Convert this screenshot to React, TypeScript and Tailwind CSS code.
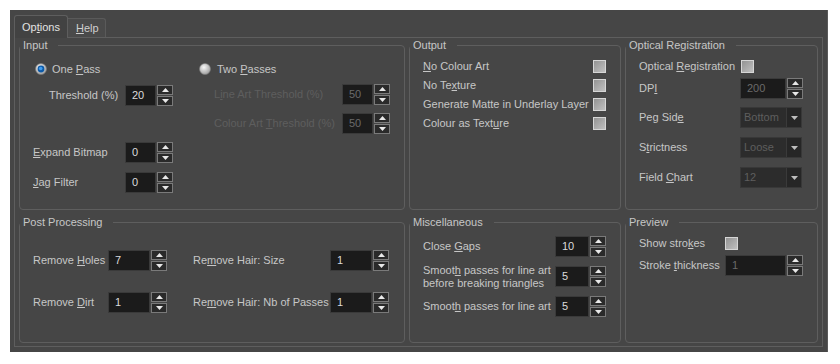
import type { ReactNode } from "react";
import clsx from "clsx";

function Arrows() {
  return (
    <div className="ml-px flex h-full w-[16px] shrink-0 flex-col gap-px">
      <div className="flex flex-1 items-center justify-center border border-[#7a7a7a] bg-[#2a2a2a]">
        <svg width="7" height="4" viewBox="0 0 7 4">
          <path d="M0 4 3.5 0 7 4Z" fill="#e8e8e8" />
        </svg>
      </div>
      <div className="flex flex-1 items-center justify-center border border-[#7a7a7a] bg-[#2a2a2a]">
        <svg width="7" height="4" viewBox="0 0 7 4">
          <path d="M0 0 3.5 4 7 0Z" fill="#e8e8e8" />
        </svg>
      </div>
    </div>
  );
}

function Spin({ value, w, off }: { value: string; w: string; off?: boolean }) {
  return (
    <div className="flex h-[21px] shrink-0">
      <div
        className={clsx(
          "flex h-full items-center border border-[#3a3a3a] bg-[#1b1b1b] pl-[6px]",
          w,
          off ? "text-[#6a6a6a]" : "text-[#dcdcdc]"
        )}
      >
        {value}
      </div>
      <Arrows />
    </div>
  );
}

function Combo({ value }: { value: string }) {
  return (
    <div className="flex h-[21px] w-[62px] shrink-0 border border-[#383838] bg-[#2c2c2c]">
      <div className="flex flex-1 items-center pl-[3px] text-[#5e5e5e]">{value}</div>
      <div className="flex w-[15px] items-center justify-center border-l border-[#3a3a3a] bg-[#262626]">
        <svg width="7" height="4" viewBox="0 0 7 4">
          <path d="M0 0 3.5 4 7 0Z" fill="#bdbdbd" />
        </svg>
      </div>
    </div>
  );
}

function Check() {
  return (
    <div className="h-[13px] w-[13px] shrink-0 border border-[#d6d6d6] bg-linear-to-br from-[#939393] to-[#c0c0c0]" />
  );
}

function Radio({ on }: { on?: boolean }) {
  const id = on ? "radio-on" : "radio-off";
  return (
    <svg width="12" height="12" viewBox="0 0 12 12" className="shrink-0">
      <defs>
        <radialGradient id={id} cx="40%" cy="35%" r="70%">
          <stop offset="0" stopColor="#f6f6f6" />
          <stop offset="1" stopColor="#9a9a9a" />
        </radialGradient>
      </defs>
      <circle cx="6" cy="6" r="5.5" fill={`url(#${id})`} stroke="#7c7c7c" strokeWidth="0.6" />
      {on && (
        <>
          <circle cx="6" cy="6" r="3.4" fill="#0d5aa8" />
          <circle cx="5.7" cy="5.5" r="1.8" fill="#3f9df0" />
        </>
      )}
    </svg>
  );
}

function Label({ w, off, children }: { w: string; off?: boolean; children: ReactNode }) {
  return (
    <span className={clsx("shrink-0 whitespace-nowrap", w, off ? "text-[#5e5e5e]" : "text-[#c6c6c6]")}>
      {children}
    </span>
  );
}

function Group({ title, className, children }: { title: string; className: string; children: ReactNode }) {
  return (
    <fieldset className={clsx("min-w-0 shrink-0 rounded-[4px] border border-[#5e5e5e] p-0", className)}>
      <legend className="pl-[3px] pr-[11px] leading-[13px] text-[#c6c6c6]">{title}</legend>
      {children}
    </fieldset>
  );
}

export default function App() {
  return (
    <div className="h-[364px] w-[840px] bg-white pl-[10px] pt-[10px] font-['Liberation_Sans',Arial,sans-serif] text-[11px] leading-[13px]">
      <div className="flex h-[342px] w-[818px] flex-col border-r border-[#5a5a5a] bg-[#464646] pl-[4px] pt-[5px]">
        {/* tabs */}
        <div className="flex h-[22px] items-end">
          <div className="relative z-10 -mb-px flex h-[23px] items-center rounded-t-[3px] border border-b-0 border-[#5e5e5e] bg-[#424242] px-[7px] text-[#e2e2e2]">
            Op<u>t</u>ions
          </div>
          <div className="flex h-[19px] items-center rounded-tr-[3px] border border-b-0 border-l-0 border-[#5a5a5a] bg-[#4a4a4a] pl-[8px] pr-[6px] text-[#cfcfcf]">
            <u>H</u>elp
          </div>
        </div>

        {/* pane */}
        <div className="h-[310px] w-[809px] border border-[#5e5e5e] pl-[4px] pt-px">
          <div className="flex gap-[4px]">
            <Group title="Input" className="h-[171px] w-[386px]">
              <div className="flex pl-[13px]">
                <div className="flex w-[166px] flex-col">
                  <div className="mt-[7px] flex h-[20px] items-center gap-[5px] pl-[2px]">
                    <Radio on />
                    <Label w="w-auto">
                      One <u>P</u>ass
                    </Label>
                  </div>
                  <div className="mt-[6px] flex h-[21px] items-center pl-[16px]">
                    <Label w="w-[76px]">Threshold (%)</Label>
                    <Spin value="20" w="w-[31px]" />
                  </div>
                  <div className="mt-[36px] flex h-[21px] items-center">
                    <Label w="w-[92px]">
                      <u>E</u>xpand Bitmap
                    </Label>
                    <Spin value="0" w="w-[31px]" />
                  </div>
                  <div className="mt-[9px] flex h-[21px] items-center">
                    <Label w="w-[92px]">
                      <u>J</u>ag Filter
                    </Label>
                    <Spin value="0" w="w-[31px]" />
                  </div>
                </div>
                <div className="flex flex-col">
                  <div className="mt-[7px] flex h-[20px] items-center gap-[6px]">
                    <Radio />
                    <Label w="w-auto">
                      Two <u>P</u>asses
                    </Label>
                  </div>
                  <div className="mt-[5px] flex h-[21px] items-center pl-[15px]">
                    <Label w="w-[128px]" off>
                      L<u>i</u>ne Art Threshold (%)
                    </Label>
                    <Spin value="50" w="w-[31px]" off />
                  </div>
                  <div className="mt-[8px] flex h-[21px] items-center pl-[15px]">
                    <Label w="w-[128px]" off>
                      Colour Art <u>T</u>hreshold (%)
                    </Label>
                    <Spin value="50" w="w-[31px]" off />
                  </div>
                </div>
              </div>
            </Group>

            <Group title="Output" className="h-[171px] w-[212px]">
              <div className="mt-[5px] flex flex-col pl-[13px] pr-[14px]">
                <div className="flex h-[19px] items-center justify-between">
                  <Label w="w-auto">
                    <u>N</u>o Colour Art
                  </Label>
                  <Check />
                </div>
                <div className="flex h-[19px] items-center justify-between">
                  <Label w="w-auto">
                    No Te<u>x</u>ture
                  </Label>
                  <Check />
                </div>
                <div className="flex h-[19px] items-center justify-between">
                  <Label w="w-auto">Generate Matte in Underlay Layer</Label>
                  <Check />
                </div>
                <div className="flex h-[19px] items-center justify-between">
                  <Label w="w-auto">
                    Colour as Text<u>u</u>re
                  </Label>
                  <Check />
                </div>
              </div>
            </Group>

            <Group title="Optical Registration" className="h-[171px] w-[193px]">
              <div className="flex flex-col pl-[13px]">
                <div className="mt-[4px] flex h-[20px] items-center">
                  <Label w="w-[102px]">
                    Optical <u>R</u>egistration
                  </Label>
                  <Check />
                </div>
                <div className="mt-[2px] flex h-[21px] items-center">
                  <Label w="w-[101px]">
                    DP<u>I</u>
                  </Label>
                  <Spin value="200" w="w-[46px]" off />
                </div>
                <div className="mt-[8px] flex h-[21px] items-center">
                  <Label w="w-[101px]">
                    Peg Sid<u>e</u>
                  </Label>
                  <Combo value="Bottom" />
                </div>
                <div className="mt-[9px] flex h-[21px] items-center">
                  <Label w="w-[101px]">
                    S<u>t</u>rictness
                  </Label>
                  <Combo value="Loose" />
                </div>
                <div className="mt-[9px] flex h-[21px] items-center">
                  <Label w="w-[101px]">
                    Field <u>C</u>hart
                  </Label>
                  <Combo value="12" />
                </div>
              </div>
            </Group>
          </div>

          <div className="mt-[6px] flex gap-[4px]">
            <Group title="Post Processing" className="h-[127px] w-[386px]">
              <div className="flex flex-col pl-[13px]">
                <div className="mt-[21px] flex h-[21px] items-center">
                  <Label w="w-[75px]">
                    Remove <u>H</u>oles
                  </Label>
                  <Spin value="7" w="w-[42px]" />
                  <div className="w-[26px] shrink-0" />
                  <Label w="w-[137px]">
                    Re<u>m</u>ove Hair: Size
                  </Label>
                  <Spin value="1" w="w-[42px]" />
                </div>
                <div className="mt-[21px] flex h-[21px] items-center">
                  <Label w="w-[75px]">
                    Remove <u>D</u>irt
                  </Label>
                  <Spin value="1" w="w-[42px]" />
                  <div className="w-[26px] shrink-0" />
                  <Label w="w-[137px]">
                    Re<u>m</u>ove Hair: Nb of Passes
                  </Label>
                  <Spin value="1" w="w-[42px]" />
                </div>
              </div>
            </Group>

            <Group title="Miscellaneous" className="h-[127px] w-[212px]">
              <div className="flex flex-col pl-[13px]">
                <div className="mt-[7px] flex h-[21px] items-center">
                  <Label w="w-[132px]">
                    Close <u>G</u>aps
                  </Label>
                  <Spin value="10" w="w-[34px]" />
                </div>
                <div className="mt-[9px] flex h-[21px] items-center">
                  <Label w="w-[132px]">
                    Smoot<u>h</u> passes for line art
                    <br />
                    before breaking triangles
                  </Label>
                  <Spin value="5" w="w-[34px]" />
                </div>
                <div className="mt-[9px] flex h-[21px] items-center">
                  <Label w="w-[132px]">
                    Smoot<u>h</u> passes for line art
                  </Label>
                  <Spin value="5" w="w-[34px]" />
                </div>
              </div>
            </Group>

            <Group title="Preview" className="h-[127px] w-[193px]">
              <div className="flex flex-col pl-[13px]">
                <div className="mt-[4px] flex h-[20px] items-center">
                  <Label w="w-[86px]">
                    Show stro<u>k</u>es
                  </Label>
                  <Check />
                </div>
                <div className="mt-[2px] flex h-[21px] items-center">
                  <Label w="w-[86px]">
                    Stroke <u>t</u>hickness
                  </Label>
                  <Spin value="1" w="w-[61px]" off />
                </div>
              </div>
            </Group>
          </div>
        </div>
      </div>
    </div>
  );
}
